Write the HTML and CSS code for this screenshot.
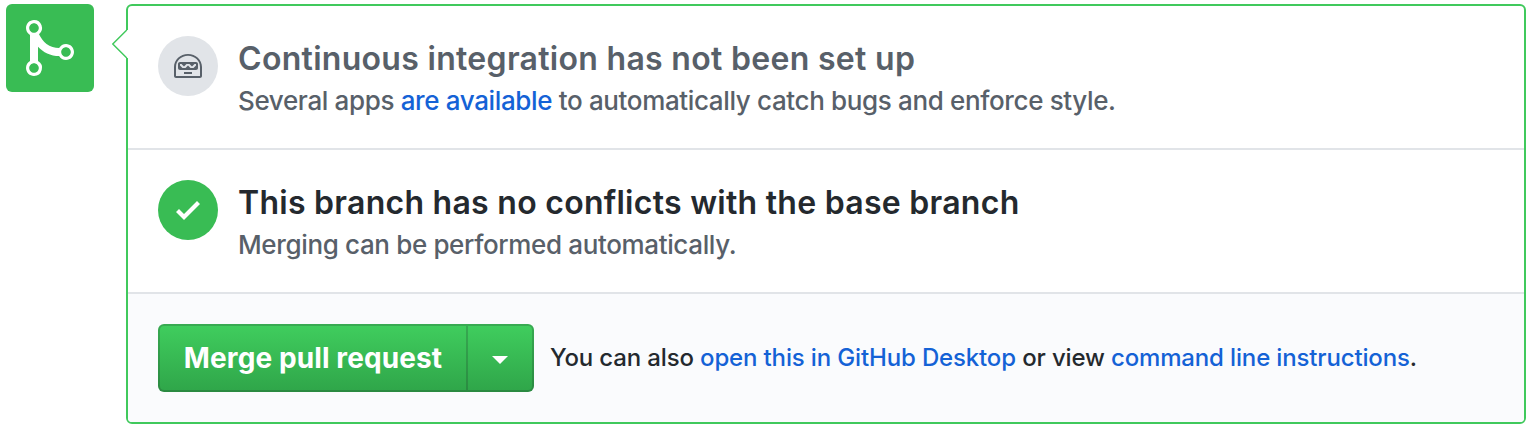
FILE: index.html
```html
<!DOCTYPE html>
<html lang="en">
<head>
<meta charset="utf-8">
<title>Merge pull request</title>
<link rel="stylesheet" href="styles.css">
</head>
<body>
<main class="merge">
  <div class="badge">
    <svg width="48" height="64" viewBox="0 0 12 16" fill="#fff"><path fill-rule="evenodd" d="M10 7c-.73 0-1.38.41-1.73 1.02V8C7.22 7.98 6 7.64 5.14 6.98c-.75-.58-1.5-1.61-1.89-2.44A1.993 1.993 0 0 0 2 .99C.89.99 0 1.89 0 3a2 2 0 0 0 1 1.72v6.56c-.59.35-1 .99-1 1.72 0 1.11.89 2 2 2a1.993 1.993 0 0 0 1-3.72V7.67c.67.7 1.44 1.27 2.3 1.69.86.42 2.03.63 2.97.64v-.02c.36.61 1 1.02 1.73 1.02 1.11 0 2-.89 2-2 0-1.11-.89-2-2-2zm-6.8 6c0 .66-.55 1.2-1.2 1.2-.65 0-1.2-.55-1.2-1.2 0-.65.55-1.2 1.2-1.2.65 0 1.2.55 1.2 1.2zM2 4.2C1.34 4.2.8 3.65.8 3c0-.65.55-1.2 1.2-1.2.65 0 1.2.55 1.2 1.2 0 .65-.55 1.2-1.2 1.2zm8 6c-.66 0-1.2-.55-1.2-1.2 0-.65.55-1.2 1.2-1.2.65 0 1.2.55 1.2 1.2 0 .65-.55 1.2-1.2 1.2z"/></svg>
  </div>
  <section class="panel">
    <svg class="pointer" width="16" height="28" viewBox="0 0 16 28"><path d="M14 0H16V28H14L.5 14z" fill="#fff"/><path d="M14.800 0 .800 14l14 14" fill="none" stroke="#40c95c" stroke-width="1.400"/></svg>
    <div class="row">
      <div class="status status-muted">
        <svg width="28" height="32" viewBox="0 0 14 16" fill="#586069"><path fill-rule="evenodd" d="M3 6c-.55 0-1 .45-1 1v2c0 .55.45 1 1 1h8c.55 0 1-.45 1-1V7c0-.55-.45-1-1-1H3zm8 1.750L9.750 9h-1.500L7 7.750 5.750 9h-1.500L3 7.750V7h.750L5 8.250 6.250 7h1.500L9 8.250 10.250 7H11v.750zM5 11h4v1H5v-1zm2-9C3.140 2 0 4.910 0 8.500V13c0 .55.45 1 1 1h12c.55 0 1-.45 1-1V8.500C14 4.910 10.860 2 7 2zm6 11H1V8.500c0-3.090 2.640-5.590 6-5.590s6 2.500 6 5.590V13z"/></svg>
      </div>
      <div>
        <h2 class="title title-muted">Continuous integration has not been set up</h2>
        <p class="desc">Several apps <a href="#">are available</a> to automatically catch bugs and enforce style.</p>
      </div>
    </div>
    <div class="row">
      <div class="status status-ok">
        <svg width="24" height="32" viewBox="0 0 12 16" fill="#fff"><path d="M12 5l-8 8-4-4 1.500-1.500L4 10l6.500-6.500z"/></svg>
      </div>
      <div>
        <h2 class="title">This branch has no conflicts with the base branch</h2>
        <p class="desc">Merging can be performed automatically.</p>
      </div>
    </div>
    <div class="actions">
      <div class="buttons"><button class="btn main">Merge pull request</button><button class="btn more" aria-label="Select merge method"><span class="caret"></span></button></div>
      <p class="help">You can also <a href="#">open this in GitHub Desktop</a> or view <a href="#">command line instructions</a>.</p>
    </div>
  </section>
</main>
</body>
</html>
```
FILE: styles.css
```css
* { box-sizing: border-box; }
body { margin: 0; background: #fff; color: #24292e; font-family: Inter, sans-serif; }
h2, p { margin: 0; white-space: nowrap; }
a { color: #1462d6; text-decoration: none; }
.merge { display: flex; gap: 32px; padding: 4px 4px 4px 6px; }
.badge { width: 88px; height: 88px; border-radius: 6px; background: #39bc54; display: flex; align-items: center; justify-content: center; flex: none; }
.panel { position: relative; flex: 1; height: 420px; border: 2px solid #40c95c; border-radius: 6px; display: flex; flex-direction: column; }
.pointer { position: absolute; left: -16px; top: 24px; }
.row { display: flex; gap: 20px; height: 144px; padding: 30px; border-bottom: 2px solid #e1e4e8; }
.status { width: 60px; height: 60px; border-radius: 50%; display: flex; align-items: center; justify-content: center; flex: none; }
.status-muted { background: #e1e4e8; }
.status-ok { background: #39bc54; }
.title { font-size: 32px; line-height: 46px; font-weight: 600; letter-spacing: 0.27px; }
.title-muted { color: #586069; letter-spacing: 0.3px; }
.desc { font-size: 26px; line-height: 37px; font-weight: 450; letter-spacing: -0.36px; color: #586069; }
.actions { flex: 1; display: flex; align-items: center; gap: 16px; padding: 0 30px; background: #fafbfd; border-radius: 0 0 4px 4px; }
.buttons { display: flex; }
.btn { height: 68px; padding: 0; border: 2px solid rgba(27, 31, 35, 0.2); background: linear-gradient(#40ce5e, #2fa549) border-box; color: #fff; font: 700 28px Inter, sans-serif; letter-spacing: 0.1px; }
.main { width: 310px; border-radius: 6px 0 0 6px; }
.more { width: 66px; border-left: 0; border-radius: 0 6px 6px 0; display: flex; align-items: center; justify-content: center; }
.caret { margin-top: 4px; border: 8px solid transparent; border-top-color: #fff; border-bottom: 0; }
.help { padding-bottom: 2px; font-size: 24px; font-weight: 450; letter-spacing: -0.15px; }
```
